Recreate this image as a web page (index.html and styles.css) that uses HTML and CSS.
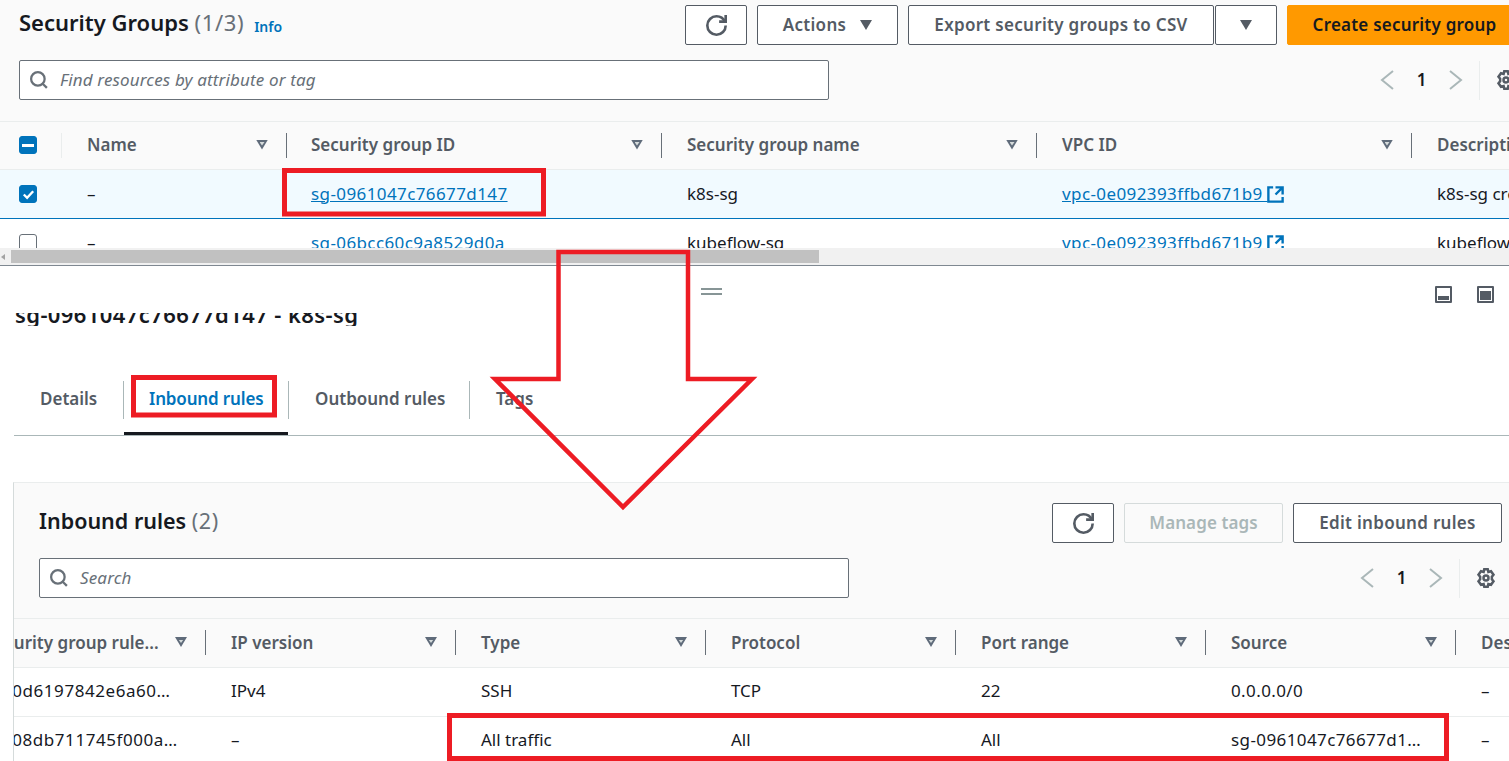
FILE: index.html
```html
<!DOCTYPE html>
<html lang="en">
<head>
<meta charset="utf-8">
<title>Security Groups</title>
<link rel="stylesheet" href="styles.css">
</head>
<body>
<svg width="0" height="0" class="defs">
  <defs>
    <symbol id="i-refresh" viewBox="0 0 16 16"><path d="M10 5h5V0" /><path d="M15 8a6.99 6.99 0 0 1-7 7 6.99 6.99 0 0 1-7-7 6.99 6.99 0 0 1 7-7 6.99 6.99 0 0 1 6.41 4.19" /></symbol>
    <symbol id="i-search" viewBox="0 0 16 16"><circle cx="7" cy="7" r="6" /><path d="m11.5 11.5 3.5 3.5" /></symbol>
    <symbol id="i-left" viewBox="0 0 16 16"><path d="M12.800 .8 4 8l8.800 7.200" /></symbol>
    <symbol id="i-right" viewBox="0 0 16 16"><path d="M3.200 .8 12 8l-8.800 7.200" /></symbol>
    <symbol id="i-gear" viewBox="0 0 16 16"><polygon points="6.6,1 9.4,1 9.9,3.2 12,2.6 14,5.4 12.7,7 12.7,9 14,10.6 12,13.4 9.9,12.8 9.4,15 6.6,15 6.1,12.8 4,13.4 2,10.6 3.3,9 3.3,7 2,5.4 4,2.6 6.1,3.2" /><circle cx="8" cy="8" r="2" /></symbol>
    <symbol id="i-ext" viewBox="0 0 16 16"><path d="M14 8V2H8M14 2 8 8M6 2H2v12h12v-4" /></symbol>
  </defs>
</svg>
<div class="page">
  <section class="top">
    <div class="bar">
      <h1 class="title">Security Groups <span class="count">(1/3)</span></h1>
      <a class="info">Info</a>
      <div class="actions">
        <button class="btn btn-icon"><svg class="ic ic-refresh"><use href="#i-refresh"/></svg></button>
        <button class="btn btn-actions">Actions <span class="caret"></span></button>
        <button class="btn btn-export">Export security groups to CSV</button>
        <button class="btn btn-split"><span class="caret"></span></button>
        <button class="btn btn-primary">Create security group</button>
      </div>
    </div>
    <div class="filter-row filter-row-top">
      <div class="search"><svg class="ic ic-search"><use href="#i-search"/></svg><span class="placeholder">Find resources by attribute or tag</span></div>
      <div class="pager pager-top">
        <svg class="ic ic-pg"><use href="#i-left"/></svg><span class="pg-num">1</span><svg class="ic ic-pg"><use href="#i-right"/></svg>
        <span class="pg-sep"></span><svg class="ic ic-gear"><use href="#i-gear"/></svg>
      </div>
    </div>
    <div class="grid grid-top head">
      <div class="th-wrap th-sel"><span class="cb cb-mixed"><span class="dash"></span></span><span class="sel-sep"></span></div>
      <div class="th-wrap"><div class="th">Name<i class="sort"></i></div></div>
      <div class="th-wrap"><div class="th th-tight">Security group ID<i class="sort"></i></div></div>
      <div class="th-wrap"><div class="th">Security group name<i class="sort"></i></div></div>
      <div class="th-wrap"><div class="th">VPC ID<i class="sort"></i></div></div>
      <div class="th-wrap"><div class="th">Description<i class="sort"></i></div></div>
    </div>
    <div class="grid grid-top row row-selected">
      <div class="td td-sel"><span class="cb cb-on"><svg class="tick" viewBox="0 0 16 16"><path d="m3 8 3.5 3.5L13 4.5"/></svg></span></div>
      <div class="td td-name">–</div>
      <div class="td td-tight"><a class="link id">sg-0961047c76677d147</a></div>
      <div class="td">k8s-sg</div>
      <div class="td"><a class="link id">vpc-0e092393ffbd671b9 </a><svg class="ic ic-ext"><use href="#i-ext"/></svg></div>
      <div class="td">k8s-sg created by kubernetes</div>
    </div>
    <div class="grid grid-top row">
      <div class="td td-sel"><span class="cb"></span></div>
      <div class="td td-name">–</div>
      <div class="td td-tight"><a class="link id">sg-06bcc60c9a8529d0a</a></div>
      <div class="td">kubeflow-sg</div>
      <div class="td"><a class="link id">vpc-0e092393ffbd671b9 </a><svg class="ic ic-ext"><use href="#i-ext"/></svg></div>
      <div class="td">kubeflow-sg created by kubernetes</div>
    </div>
  </section>

  <div class="hscroll"><span class="hs-arrow"></span><span class="hs-thumb"></span></div>

  <section class="split">
    <div class="split-tools">
      <span class="grip"></span>
      <span class="pane-icons">
        <span class="pane pane-low"><i></i></span>
        <span class="pane pane-high"><i></i></span>
      </span>
    </div>
    <div class="clip-title"><h2 class="sg-title">sg-0961047c76677d147 - k8s-sg</h2></div>
    <nav class="tabs">
      <a class="tab tab-details">Details</a>
      <a class="tab tab-active">Inbound rules</a>
      <a class="tab tab-out">Outbound rules</a>
      <a class="tab tab-tags">Tags</a>
    </nav>
    <div class="panel">
      <div class="bar bar-panel">
        <h2 class="panel-title">Inbound rules <span class="count">(2)</span></h2>
        <div class="actions actions-panel">
          <button class="btn btn-icon"><svg class="ic ic-refresh"><use href="#i-refresh"/></svg></button>
          <button class="btn btn-disabled">Manage tags</button>
          <button class="btn btn-edit">Edit inbound rules</button>
        </div>
      </div>
      <div class="filter-row filter-row-panel">
        <div class="search"><svg class="ic ic-search ic-search-sm"><use href="#i-search"/></svg><span class="placeholder placeholder-sm">Search</span></div>
        <div class="pager pager-panel">
          <svg class="ic ic-pg"><use href="#i-left"/></svg><span class="pg-num">1</span><svg class="ic ic-pg"><use href="#i-right"/></svg>
          <span class="pg-sep"></span><svg class="ic ic-gear"><use href="#i-gear"/></svg>
        </div>
      </div>
      <div class="rules">
        <div class="grid grid-rules head">
          <div class="th-wrap"><div class="th th-first">Security group rule...<i class="sort"></i></div></div>
          <div class="th-wrap"><div class="th">IP version<i class="sort"></i></div></div>
          <div class="th-wrap"><div class="th">Type<i class="sort"></i></div></div>
          <div class="th-wrap"><div class="th">Protocol<i class="sort"></i></div></div>
          <div class="th-wrap"><div class="th">Port range<i class="sort"></i></div></div>
          <div class="th-wrap"><div class="th">Source<i class="sort"></i></div></div>
          <div class="th-wrap"><div class="th">Description<i class="sort"></i></div></div>
        </div>
        <div class="grid grid-rules row">
          <div class="td td-first id">sgr-0d6197842e6a60…</div>
          <div class="td">IPv4</div>
          <div class="td">SSH</div>
          <div class="td">TCP</div>
          <div class="td">22</div>
          <div class="td id">0.0.0.0/0</div>
          <div class="td">–</div>
        </div>
        <div class="grid grid-rules row">
          <div class="td td-first id">sgr-08db711745f000a…</div>
          <div class="td">–</div>
          <div class="td">All traffic</div>
          <div class="td">All</div>
          <div class="td">All</div>
          <div class="td id">sg-0961047c76677d1…</div>
          <div class="td">–</div>
        </div>
      </div>
    </div>
  </section>

  <svg class="marks" viewBox="0 0 1509 761">
    <rect x="284.500" y="170.500" width="259" height="43.500"/>
    <rect x="133.500" y="377.500" width="141" height="37.500"/>
    <rect x="449.500" y="715.500" width="997" height="43"/>
    <path class="arrow" d="M558.500 252H688V379H752L623 507 495 379H558.500Z"/>
  </svg>
</div>
</body>
</html>
```
FILE: styles.css
```css
* { box-sizing: border-box; }
html, body { margin: 0; padding: 0; height: 761px; overflow: hidden; background: #fff; }
body { font-family: "Noto Sans", "Liberation Sans", sans-serif; font-size: 17px; color: #16191f; }
.defs { position: absolute; }
.page { position: relative; width: 1509px; height: 761px; overflow: hidden; }
.marks { position: absolute; left: 0; top: 0; width: 1509px; height: 761px; fill: none; stroke: #ed1c24; stroke-width: 5; pointer-events: none; }
.arrow { stroke-width: 4.500; }
.id { letter-spacing: .4px; }

.ic { fill: none; stroke: #545b64; stroke-width: 2; display: block; flex: none; }
.ic-refresh { width: 21px; height: 21px; }
.ic-search { width: 18px; height: 18px; margin: 0 12px 0 10px; stroke: #687078; }
.ic-search-sm { margin-right: 12px; }
.ic-pg { width: 20px; height: 20px; stroke: #aab7b8; stroke-width: 1.600; }
.ic-gear { width: 20px; height: 20px; }
.ic-ext { width: 19px; height: 19px; stroke: #0073bb; stroke-width: 2; margin: 2px 0 0 -2px; }

.top { height: 248px; overflow: hidden; background: #fafafa; }
.bar { display: flex; align-items: flex-start; width: 1522px; height: 49px; padding: 5px 0 0 19px; }
.title { margin: 0; font-size: 22px; line-height: 35px; font-weight: 600; }
.count { font-weight: 400; color: #687078; letter-spacing: .6px; }
.info { font-size: 14px; font-weight: 600; color: #0073bb; margin-left: 10px; line-height: 38px; padding-top: 3px; }
.actions { display: flex; margin-left: auto; gap: 10px; }
.btn { height: 40px; border: 1px solid #545b64; border-radius: 2px; background: #fff; color: #545b64; font: 600 17px "Noto Sans", "Liberation Sans", sans-serif; letter-spacing: .3px; padding: 0 0 2px; display: flex; align-items: center; justify-content: center; }
.btn-icon { width: 62px; padding: 0; }
.btn-actions { width: 141px; gap: 14px; }
.btn-export { width: 306px; }
.btn-split { width: 62px; margin-left: -9px; }
.btn-primary { width: 235px; background: #ff9900; border-color: #ff9900; color: #16191f; letter-spacing: .22px; }
.btn-disabled { width: 159px; background: #fafafa; border-color: #d5dbdb; color: #aab7b8; letter-spacing: .1px; }
.btn-edit { width: 209px; }
.caret { width: 0; height: 0; border-left: 6.500px solid transparent; border-right: 6.500px solid transparent; border-top: 10px solid #545b64; margin-top: 2px; }

.filter-row { display: flex; align-items: center; }
.filter-row-top { height: 40px; margin-top: 11px; padding-left: 19px; width: 1522px; }
.search { width: 810px; height: 40px; border: 1px solid #687078; border-radius: 2px; background: #fff; display: flex; align-items: center; }
.placeholder { font-style: italic; color: #687078; font-size: 17px; letter-spacing: .15px; margin-bottom: 2px; }
.pager { display: flex; align-items: center; }
.pager-top { margin-left: 548px; }
.pg-num { width: 49px; text-align: center; font-weight: 600; margin-bottom: 1px; }
.pg-sep { width: 1px; height: 39px; background: #eaeded; margin: 0 16px 0 13px; }

.grid { display: grid; }
.grid-top { grid-template-columns: 62px 225px 375px 375px 375px 375px; width: 1787px; }
.grid-rules { grid-template-columns: repeat(7, 250px); width: 1750px; }
.head { height: 49px; border-top: 1px solid #eaeded; border-bottom: 1px solid #eaeded; background: #fafafa; padding-bottom: 1px; }
.grid-top.head { margin-top: 21px; }
.grid-rules.head { height: 50px; }
.th-wrap { display: flex; align-items: center; position: relative; }
.th-sel { padding-left: 19px; }
.th { flex: 1; min-width: 0; height: 25px; display: flex; align-items: center; justify-content: space-between; padding: 0 18px 1px 25px; border-right: 1px solid #687078; color: #545b64; font-weight: 600; white-space: nowrap; }
.th-first { padding-left: 30px; }
.th-tight { padding-left: 24px; }
.sort { width: 12px; height: 10px; background: #5f6b7a; clip-path: polygon(0 0, 100% 0, 50% 100%); flex: none; position: relative; }
.sort::after { content: ""; position: absolute; left: 3.500px; top: 2.500px; width: 5px; height: 3.500px; background: #d5dbdb; clip-path: polygon(0 0, 100% 0, 50% 100%); }
.sel-sep { width: 1px; height: 25px; background: #eaeded; margin-left: 24px; }

.row { height: 49px; background: #fff; border-bottom: 1px solid #eaeded; }
.row-selected { background: #f1faff; border-bottom-color: #0073bb; }
.td { display: flex; align-items: center; padding: 0 0 2px 25px; white-space: nowrap; overflow: hidden; }
.grid-rules .td { padding-bottom: 3px; }
.td-sel { padding: 0 0 0 19px; }
.td-tight { padding-left: 24px; }
.grid-rules .td-first { padding-left: 23px; letter-spacing: .55px; }
.link { color: #0073bb; text-decoration: underline; white-space: pre; }

.cb { width: 18px; height: 18px; border: 1px solid #687078; border-radius: 3px; background: #fff; display: flex; align-items: center; justify-content: center; flex: none; }
.cb-on, .cb-mixed { background: #0073bb; border-color: #0073bb; }
.tick { width: 15px; height: 15px; fill: none; stroke: #fff; stroke-width: 2.500; }
.dash { width: 12px; height: 3px; background: #fff; }

.hscroll { height: 18px; background: #f1f1f1; border-bottom: 1px solid #7f8891; position: relative; display: flex; align-items: center; padding-left: 1px; }
.hs-arrow { width: 0; height: 0; border-top: 3px solid transparent; border-bottom: 3px solid transparent; border-right: 4px solid #a3a3a3; }
.hs-thumb { width: 808px; height: 13px; background: #c1c1c1; margin-left: 6px; }

.split { background: #fff; height: 495px; position: relative; }
.split-tools { height: 37px; position: relative; }
.grip { position: absolute; left: 701px; top: 22px; width: 21px; height: 7px; border-top: 2px solid #879596; border-bottom: 2px solid #879596; }
.pane-icons { position: absolute; left: 1435px; top: 20px; display: flex; gap: 25px; }
.pane { width: 17px; height: 17px; border: 2px solid #545b64; border-radius: 1px; display: flex; align-items: flex-end; padding: 1px; }
.pane i { display: block; width: 100%; background: #545b64; }
.pane-low i { height: 4px; }
.pane-high i { height: 9px; }

.clip-title { height: 13px; margin-top: 10px; overflow: hidden; padding-left: 15px; }
.sg-title { margin: -14px 0 0; font-size: 22px; line-height: 30px; font-weight: 600; letter-spacing: .4px; }

.tabs { display: flex; align-items: flex-start; height: 56px; margin: 54px 0 0 14px; border-bottom: 1px solid #aab7b8; }
.tab { height: 38px; display: flex; align-items: center; font-weight: 600; color: #545b64; border-right: 1px solid #aab7b8; position: relative; padding: 0 0 3px 26px; margin-top: 1px; white-space: nowrap; }
.tab-details { width: 110px; }
.tab-active { width: 165px; color: #0073bb; padding-left: 25px; letter-spacing: -.15px; }
.tab-active::after { content: ""; position: absolute; left: 0; right: 0; top: 51px; height: 3px; background: #16191f; }
.tab-out { width: 181px; }
.tab-tags { border-right: 0; }

.panel { position: absolute; left: 13px; top: 216px; right: 0; bottom: 0; background: #fafafa; border-top: 1px solid #eaeded; border-left: 1px solid #d5dbdb; overflow: hidden; }
.bar-panel { width: 1488px; height: 60px; padding: 20px 0 0 25px; }
.panel-title { margin: 0; font-size: 21.500px; line-height: 36px; font-weight: 600; }
.filter-row-panel { height: 40px; margin-top: 15px; padding-left: 25px; }
.pager-panel { margin-left: 508px; }
.rules { margin: 20px 0 0 -58px; }
```
